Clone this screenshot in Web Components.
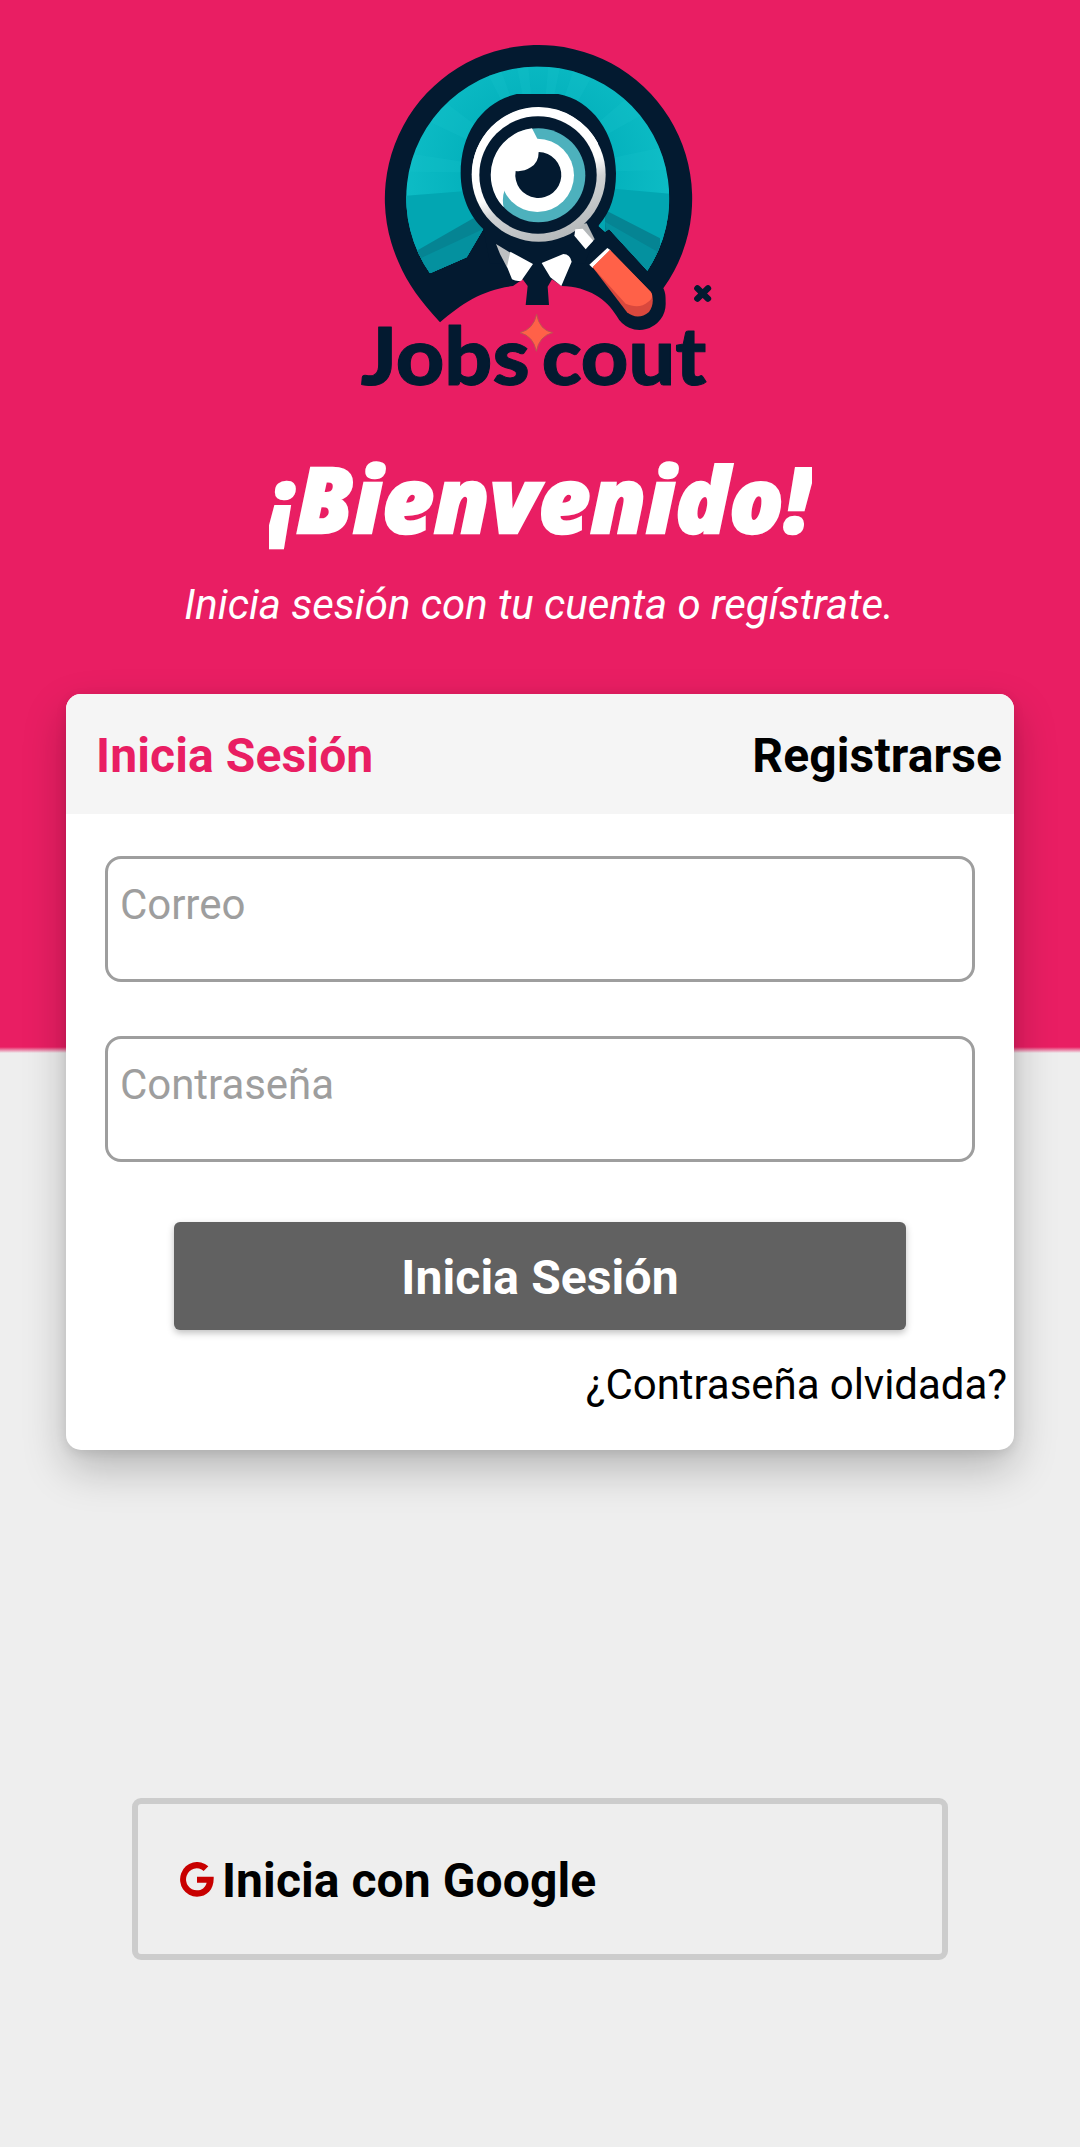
<!DOCTYPE html>
<html lang="es">
<head>
<meta charset="utf-8">
<title>JobScout</title>
<style>
html,body{margin:0;padding:0}
body{font-family:Roboto,"Liberation Sans",sans-serif;color:#000;background:#eee}
</style>
</head>
<body>
<login-page></login-page>
<script>
const define = (name, html) => {
  const tpl = document.createElement('template');
  tpl.innerHTML = html;
  customElements.define(name, class extends HTMLElement {
    constructor() {
      super();
      this.attachShadow({mode: 'open'}).appendChild(tpl.content.cloneNode(true));
    }
  });
};

define('job-logo', `
<style>:host{display:block;width:400px;height:370px}svg{display:block;width:100%;height:100%;overflow:visible}</style>
<svg viewBox="0 0 1200 1110" role="img">
  <defs>
    <radialGradient id="teal" gradientUnits="userSpaceOnUse" cx="595" cy="430" r="400">
      <stop offset=".55" stop-color="#04b2bd"/><stop offset="1" stop-color="#0dbcc5"/>
    </radialGradient>
    <linearGradient id="rim" gradientUnits="userSpaceOnUse" x1="530" y1="300" x2="660" y2="640">
      <stop offset="0" stop-color="#fff"/><stop offset=".45" stop-color="#fdfdfd"/><stop offset=".6" stop-color="#cfd2d4"/><stop offset="1" stop-color="#b3b7b9"/>
    </linearGradient>
    <clipPath id="disc"><path d="M270 730A394.500 394.500 0 1 1 922 722L807 597 795 605 595 430 430 597 380 682Z"/></clipPath>
  </defs>
  <path fill="#031a30" d="M300 877C240 810 205 765 175 695A461 461 0 1 1 970 775C977 790 977 800 977 820A78 78 0 0 1 830 858C800 808 745 770 665 768L636 748 623 770 627 825H557L563 768 548 748 519 768C430 778 365 820 300 877Z"/>
  <g clip-path="url(#disc)">
    <rect x="190" y="100" width="810" height="650" fill="url(#teal)"/>
    <path fill="#02a6b2" d="M190 498L370 484 595 430 830 477 1000 492V760H190Z"/>
    <path fill="#058493" d="M230 662L400 565 470 560V740H230ZM795 540L960 625 960 740 795 620Z"/>
    <path fill="#04919f" d="M230 690L430 597 380 682 270 740ZM795 575L950 664 930 740 800 600Z"/>
    <g fill="#17c4cb" opacity=".25"><path d="M595 430L440 125 480 112ZM595 430L530 108 565 108ZM595 430L625 108 660 112ZM595 430L700 122 755 140ZM595 430L268 275 320 220ZM595 430L205 370 200 425ZM595 430L860 205 905 255ZM595 430L975 350 985 420Z"/></g>
  </g>
  <path fill="#031a30" d="M530 192H655C755 210 828 310 828 430C828 495 812 545 777 585L735 700H450L430 597C390 560 362 500 362 430C362 305 430 215 530 192Z"/>
  <path fill="#b3b7b9" d="M700 585L740 580 764 628 740 650Z"/>
  <circle cx="596" cy="434" r="201" fill="url(#rim)"/>
  <path fill="#fff" d="M596 231A200 200 0 0 0 396 431L418 438A176 176 0 0 1 768 395L774 340A202 202 0 0 0 596 231Z"/>
  <circle cx="594" cy="435" r="176" fill="#031a30"/>
  <circle cx="595" cy="436" r="141" fill="#4db1bd"/>
  <path fill="#fff" d="M576 295A141 141 0 0 0 491 532Q485 505 494 479L592 422 592 326Z"/>
  <circle cx="592" cy="436" r="110" fill="#fff"/>
  <path fill="#031a30" d="M596 366A69 69 0 1 1 527 423Q550 426 572 412Q596 398 596 366Z"/>
  <path fill="#fff" d="M706 598L728 596 760 632 737 658 703 617Z"/>
  <path fill="#bdc0c2" d="M468 642L518 672 502 714 480 672Z"/>
  <path fill="#fff" d="M511 665L579 702 544 752Q530 756 516 748L501 710ZM605 699L670 672Q690 672 695 695L664 768 631 742Z"/>
  <path fill="#fff" d="M748 704L802 654 812 661 758 714Z"/>
  <path fill="#d9483d" d="M758 712L810 660 932 785C942 805 940 828 927 846C905 865 880 863 861 847Z"/>
  <path fill="#ff6148" d="M758 712L810 660 932 785C941 797 936 807 925 815C905 833 881 831 857 821Z"/>
  <g stroke="#031a30" stroke-width="19" stroke-linecap="round"><path d="M1072 775L1104 806M1104 775L1072 806"/></g>
  <g fill="#031a30" font-family="Lato, 'Open Sans', sans-serif" font-weight="900" font-size="241" stroke="#031a30" stroke-width="3" stroke-linejoin="round">
    <text x="62" y="1065" textLength="507" lengthAdjust="spacingAndGlyphs">Jobs</text>
    <text x="605" y="1065" textLength="494" lengthAdjust="spacingAndGlyphs">cout</text>
  </g>
  <path fill="#ff6148" stroke="#bd5451" stroke-width="3" d="M590 853Q598 900 638 908Q598 918 589 964Q580 918 540 908Q580 898 590 853Z"/>
</svg>`);

define('welcome-head', `
<style>
:host{display:flex;flex-direction:column;align-items:center;color:#fff}
svg{display:block;width:543px;height:140px;margin-top:26px}
p{margin:14px 2px 0 0;font:italic 400 42px/50px Roboto,sans-serif;letter-spacing:-.03px;white-space:nowrap}
</style>
<svg viewBox="0 0 543 140"><text x="0" y="107" font-family="Open Sans, sans-serif" font-weight="800" font-style="italic" font-size="91" fill="#fff" stroke="#fff" stroke-width="2.500" textLength="542" lengthAdjust="spacingAndGlyphs">¡Bienvenido!</text></svg>
<p><slot></slot></p>`);

define('tab-bar', `
<style>
:host{display:flex;justify-content:space-between;align-items:center;height:120px;padding:3px 12px 0 30px;background:#f5f5f5;font:700 48px/56px Roboto,sans-serif;letter-spacing:.12px;box-sizing:border-box;border-radius:15px 15px 0 0}
::slotted([active]){color:#e91e63}
</style><slot></slot>`);

define('text-field', `
<style>
:host{display:block;box-sizing:border-box;height:126px;border:3px solid #9e9e9e;border-radius:16px;padding:21px 12px;color:#9e9e9e;font:400 42px/50px Roboto,sans-serif;letter-spacing:-.05px}
</style><slot></slot>`);

define('raised-button', `
<style>
:host{display:flex;align-items:center;justify-content:center;box-sizing:border-box;height:108px;padding-top:3px;border-radius:6px;background:#616161;color:#fff;font:700 48px/56px Roboto,sans-serif;letter-spacing:.12px;box-shadow:0 3px 7px rgba(0,0,0,.25)}
</style><slot></slot>`);

define('login-card', `
<style>
:host{display:flex;flex-direction:column;box-sizing:border-box;width:948px;height:756px;border-radius:15px;background:#fff;box-shadow:0 19px 44px rgba(0,0,0,.23),0 3px 12px rgba(0,0,0,.09)}
.fields{display:flex;flex-direction:column;gap:54px;padding:42px 39px 60px}
raised-button{margin:0 108px}
.forgot{align-self:flex-end;font:400 42px/50px Roboto,sans-serif;letter-spacing:-.05px;margin:30px 7px 0 0}
</style>
<tab-bar><span active>Inicia Sesión</span><span>Registrarse</span></tab-bar>
<div class="fields"><text-field>Correo</text-field><text-field>Contraseña</text-field></div>
<raised-button>Inicia Sesión</raised-button>
<div class="forgot">¿Contraseña olvidada?</div>`);

define('google-button', `
<style>
:host{display:flex;align-items:center;box-sizing:border-box;width:816px;height:162px;border:6px solid #ccc;border-radius:9px;padding:0 42px;font:700 48px/56px Roboto,sans-serif;letter-spacing:.08px}
svg{display:block;width:34px;height:35px;margin-right:8px}
span{padding-top:3px}
</style>
<svg viewBox="0 0 102 105"><path fill="#c80000" d="M101 44H51V62H80C76 77 65 85 51 85A32 33 0 1 1 71 27L85 13A51 52 0 1 0 51 104C82 104 103 82 101 44Z"/></svg>
<span><slot></slot></span>`);

define('login-page', `
<style>
:host{display:flex;flex-direction:column;align-items:center;box-sizing:border-box;height:2147px;padding-top:30px;background:linear-gradient(#e91e63 1047px,#eee 1053px)}
login-card{margin-top:64px}
google-button{margin-top:348px}
</style>
<job-logo></job-logo>
<welcome-head>Inicia sesión con tu cuenta o regístrate.</welcome-head>
<login-card></login-card>
<google-button>Inicia con Google</google-button>`);
</script>
</body>
</html>
